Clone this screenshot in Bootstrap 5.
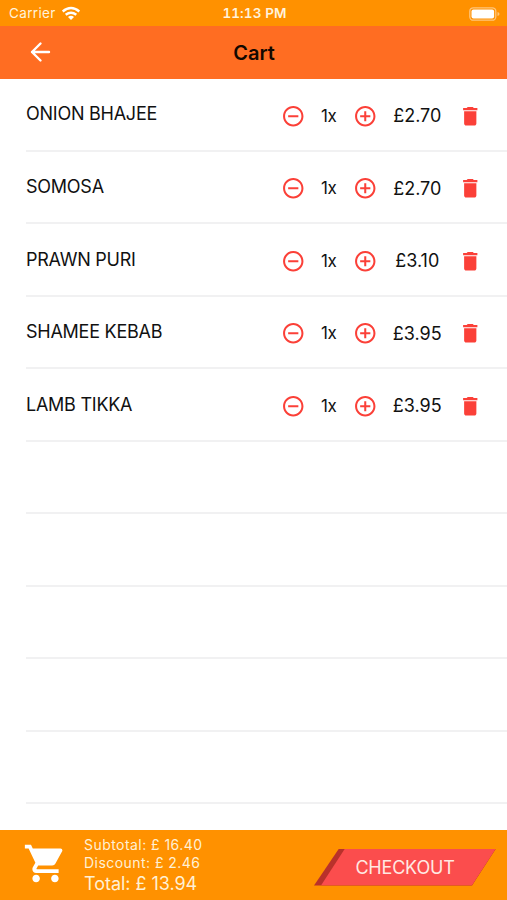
<!DOCTYPE html>
<html lang="en">
<head>
<meta charset="utf-8">
<meta name="viewport" content="width=device-width, initial-scale=1">
<title>Cart</title>
<link href="https://cdn.jsdelivr.net/npm/bootstrap@5.3.0/dist/css/bootstrap.min.css" rel="stylesheet">
<style>
body{font-family:Inter,"Liberation Sans",sans-serif;color:#111;background:#fff;line-height:1.2}
svg{display:block;flex:none}
.status-bar{height:26px;background:#ff9100;color:#fff3dc;padding:1px 7px 0 9px}
.carrier{font-size:13.5px;letter-spacing:.35px}
.clock{font-size:13.5px;font-weight:600;letter-spacing:.1px;font-variant-numeric:tabular-nums}
.title-bar{height:53px;background:#ff6d22;padding:0 27px 0 28px}
.title-bar h1{font-size:20px;font-weight:600;color:#120800;letter-spacing:0}
.items{padding-left:26px}
.item{height:72.55px;border-bottom:2px solid #f1f1f2;padding-top:2px}
.item-name{font-size:18px;letter-spacing:-.25px;padding-bottom:2px}
.qty{width:47.5px;font-size:17px;letter-spacing:-.3px}
.price{width:80.5px;font-size:18px}
.tools{padding-right:25px;padding-top:1px;color:#fb4038}
.tools span{color:#111}
.cart-footer{height:70px;background:#ff9100;color:#fff0d5;padding:0 11px 0 23px}
.cart-icon{margin-bottom:4px}
.summary{padding-top:2px}
.sum{font-size:14px;line-height:18px;letter-spacing:.45px}
.total{font-size:18px;line-height:24px;letter-spacing:-.03px}
.checkout{width:182px;height:37px;background:#b9312b;clip-path:polygon(25px 0,100% 0,158px 100%,0 100%)}
.checkout-face{background:#fb4d4d;color:#ffe9e2;clip-path:polygon(31px 0,100% 0,158px 100%,7px 100%);font-size:18px;letter-spacing:-.2px;padding-top:1px}
</style>
<script src="https://cdn.jsdelivr.net/npm/bootstrap@5.3.0/dist/js/bootstrap.bundle.min.js"></script>
</head>
<body>
<svg class="d-none" aria-hidden="true">
<symbol id="minus" viewBox="0 0 24 24"><path d="M7 11v2h10v-2H7zm5-9C6.480 2 2 6.480 2 12s4.480 10 10 10 10-4.480 10-10S17.520 2 12 2zm0 18c-4.410 0-8-3.590-8-8s3.590-8 8-8 8 3.590 8 8-3.590 8-8 8z"/></symbol>
<symbol id="plus" viewBox="0 0 24 24"><path d="M13 7h-2v4H7v2h4v4h2v-4h4v-2h-4V7zm-1-5C6.480 2 2 6.480 2 12s4.480 10 10 10 10-4.480 10-10S17.520 2 12 2zm0 18c-4.410 0-8-3.590-8-8s3.590-8 8-8 8 3.590 8 8-3.590 8-8 8z"/></symbol>
<symbol id="trash" viewBox="0 0 24 24"><path d="M6 19c0 1.100.9 2 2 2h8c1.100 0 2-.9 2-2V7H6v12zM19 4h-3.500l-1-1h-5l-1 1H5v2h14V4z"/></symbol>
</svg>
<div class="vh-100 d-flex flex-column overflow-hidden">
<div class="status-bar d-flex align-items-center">
<div class="col d-flex align-items-center"><span class="carrier">Carrier</span>
<svg class="ms-1" width="22" height="18" viewBox="0 0 22 18" fill="none" stroke="#fff" stroke-width="2.400"><path d="M2.700 6.500Q11-.4 19.300 6.500M5.700 9.800Q11 5.500 16.300 9.800"/><path d="M8 11.900Q11 9.800 14 11.900L11 15Z" fill="#fff" stroke="none"/></svg></div>
<div class="clock">11:13 PM</div>
<div class="col d-flex justify-content-end"><svg width="31" height="14" viewBox="0 0 31 14"><rect x=".8" y=".8" width="26" height="12.400" rx="3.500" fill="none" stroke="#ffc57b" stroke-width="1.300"/><rect x="2.500" y="2.500" width="22.600" height="9" rx="2" fill="#fff"/><path d="M28.500 5v4q2-.7 2-2t-2-2z" fill="#ffc57b"/></svg></div>
</div>
<header class="title-bar d-flex align-items-center">
<div class="col"><svg width="24" height="24" viewBox="0 0 24 24" fill="none" stroke="#fff" stroke-width="2.400" stroke-linecap="round" stroke-linejoin="round"><path d="M12.500 2.500 4 11l8.500 8.500M4 11h17"/></svg></div>
<h1 class="m-0">Cart</h1><div class="col"></div>
</header>
<main class="items flex-grow-1 overflow-hidden" id="items"></main>
<footer class="cart-footer d-flex align-items-center flex-shrink-0">
<svg class="cart-icon" width="45" height="45" viewBox="0 0 24 24" fill="#fff"><path d="M7 18c-1.100 0-1.990.9-1.990 2S5.900 22 7 22s2-.9 2-2-.9-2-2-2zM1 2v2h2l3.600 7.590-1.350 2.450c-.16.28-.25.61-.25.960 0 1.100.9 2 2 2h12v-2H7.420c-.14 0-.25-.11-.25-.25l.03-.12.9-1.630h7.450c.75 0 1.410-.41 1.750-1.030l3.580-6.490c.08-.14.12-.31.12-.48 0-.55-.45-1-1-1H5.210l-.94-2H1zm16 16c-1.100 0-1.990.9-1.990 2s.89 2 1.990 2 2-.9 2-2-.9-2-2-2z"/></svg>
<div class="summary ps-3"><div class="sum">Subtotal: £ 16.40</div><div class="sum">Discount: £ 2.46</div><div class="total">Total: £ 13.94</div></div>
<button type="button" class="checkout ms-auto mt-1 border-0 p-0"><span class="checkout-face d-flex w-100 h-100 align-items-center justify-content-center">CHECKOUT</span></button>
</footer>
</div>
<script>
const items=[["ONION BHAJEE","£2.70"],["SOMOSA","£2.70"],["PRAWN PURI","£3.10"],["SHAMEE KEBAB","£3.95"],["LAMB TIKKA","£3.95"]];
const icon=n=>`<svg width="24.500" height="24.500" fill="currentColor"><use href="#${n}"/></svg>`;
document.getElementById("items").innerHTML=Array.from({length:10},(_,i)=>{
const it=items[i];
return `<div class="item d-flex align-items-center justify-content-between">${it?`<div class="item-name">${it[0]}</div><div class="tools d-flex align-items-center">${icon("minus")}<span class="qty text-center">1x</span>${icon("plus")}<span class="price text-center">${it[1]}</span>${icon("trash")}</div>`:""}</div>`}).join("");
</script>
</body>
</html>
